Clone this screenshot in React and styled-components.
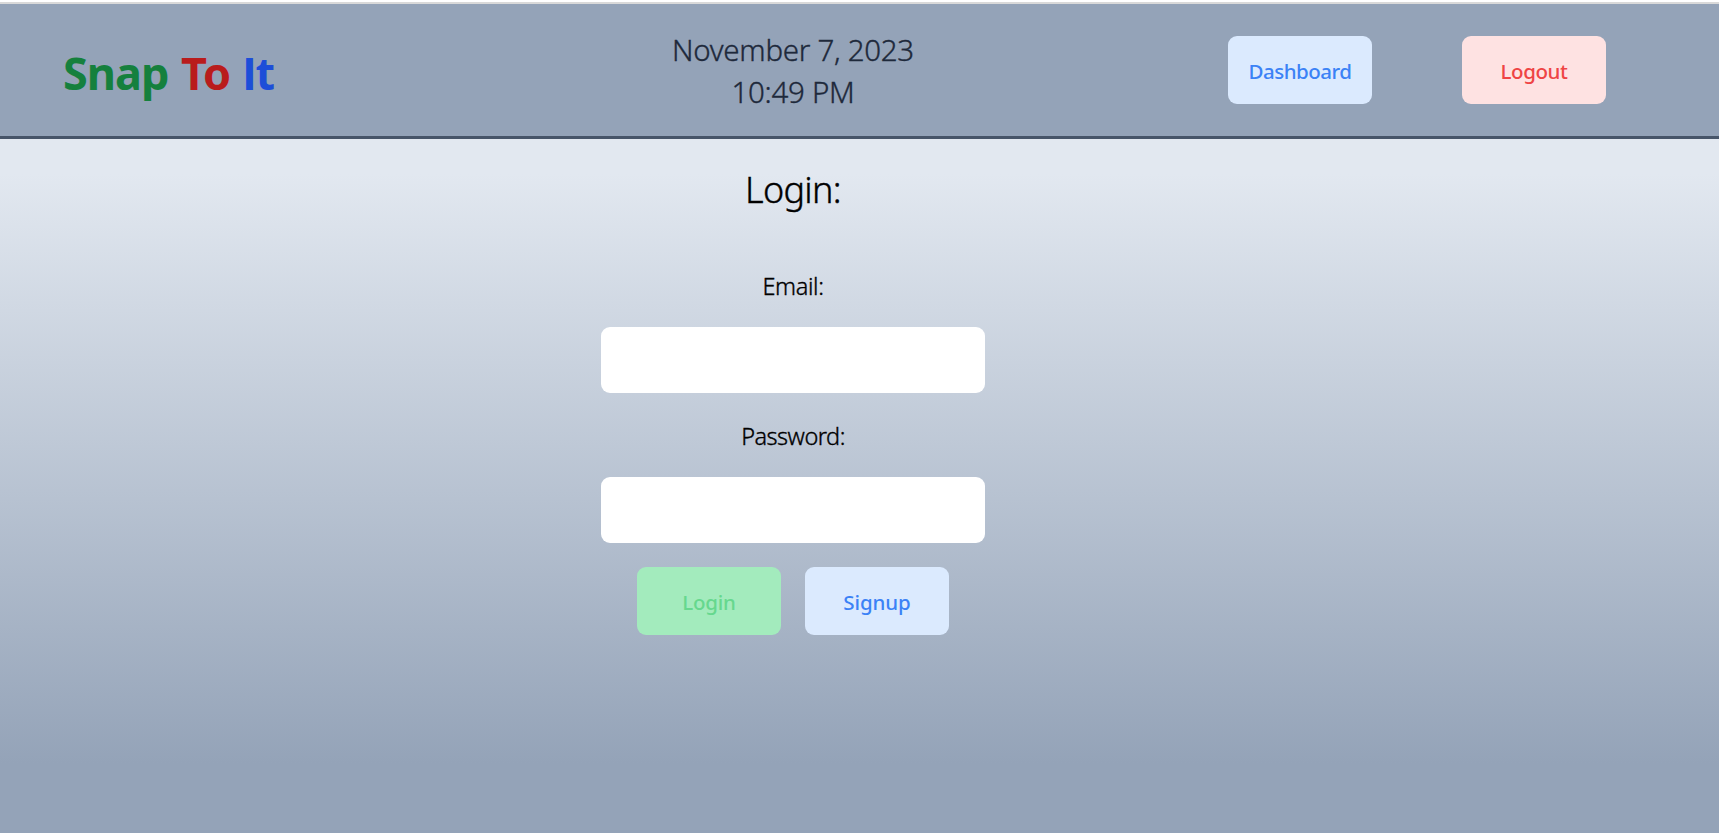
import React, { useState } from "react";
import styled, { createGlobalStyle } from "styled-components";

const GlobalStyle = createGlobalStyle`
  *, *::before, *::after {
    box-sizing: border-box;
  }
  body {
    margin: 0;
    color: #000;
    font-family: "Noto Sans", "Open Sans", sans-serif;
  }
`;

const Page = styled.div`
  display: flex;
  flex-direction: column;
  height: 100vh;
  overflow: hidden;
  border-top: 2px solid #fff;
`;

const Header = styled.header`
  display: grid;
  grid-template-columns: 538px 384px 1fr;
  align-items: center;
  flex: none;
  height: 137px;
  padding-left: 63px;
  background: #94a3b8;
  border-top: 2px solid #d9d9d9;
  border-bottom: 3px solid #475569;
`;

const Logo = styled.h1`
  display: flex;
  margin: 5px 0 0;
  font-size: 45px;
  font-weight: 700;
  line-height: 60px;
`;

const LogoWord = styled.span`
  color: ${(p) => p.$color};
  width: ${(p) => p.$width}px;
  white-space: nowrap;
  font-family: ${(p) => p.$family || '"Noto Sans"'}, sans-serif;
  letter-spacing: ${(p) => p.$tracking}px;
`;

const Clock = styled.div`
  display: flex;
  flex-direction: column;
  align-items: center;
  margin-top: 2px;
  color: #1e293b;
  font-size: 29.5px;
  font-weight: 300;
  -webkit-text-stroke: 0.35px currentColor;
  line-height: 42px;
  letter-spacing: -0.3px;
`;

const HeaderActions = styled.nav`
  display: flex;
  gap: 90px;
  margin-left: 243px;
`;

const tones = {
  blue: ["#dbeafe", "#3b82f6"],
  red: ["#fee2e2", "#ef4444"],
  green: ["#a3ebbd", "#66d88e"],
};

const Button = styled.button`
  width: 144px;
  height: 68px;
  padding: 2px 0 0;
  border: 0;
  border-radius: 9px;
  background: ${(p) => tones[p.$tone][0]};
  color: ${(p) => tones[p.$tone][1]};
  font-family: "Noto Sans", sans-serif;
  font-size: 20.5px;
  font-weight: 500;
  line-height: 30px;
  letter-spacing: ${(p) => p.$tracking}px;
`;

const Main = styled.main`
  flex: 1;
  padding: 24px 0 0 601px;
  background: linear-gradient(to bottom, #e2e8f0 5%, #94a3b8 90%);
`;

const Form = styled.form`
  display: flex;
  flex-direction: column;
  align-items: center;
  width: 384px;
`;

const Title = styled.h2`
  margin: 0 0 51px;
  font-size: 36px;
  font-weight: 300;
  -webkit-text-stroke: 0.4px currentColor;
  line-height: 54px;
  letter-spacing: -0.7px;
`;

const Field = styled.label`
  display: flex;
  flex-direction: column;
  align-items: center;
  width: 100%;
  margin-bottom: 24px;
  font-size: 23.5px;
  font-weight: 300;
  line-height: 36px;
  letter-spacing: ${(p) => p.$tracking}px;
`;

const FieldName = styled.span`
  margin-bottom: 23px;
  -webkit-text-stroke: 0.35px currentColor;

  ${Field} + ${Field} & {
    padding-top: 1px;
  }
`;

const Input = styled.input`
  width: 100%;
  height: 66px;
  padding: 0 18px;
  border: 0;
  border-radius: 9px;
  background: #fff;
  font: inherit;
`;

const FormActions = styled.div`
  display: flex;
  gap: 24px;
`;

export default function App() {
  const [email, setEmail] = useState("");
  const [password, setPassword] = useState("");

  return (
    <Page>
      <GlobalStyle />
      <Header>
        <Logo>
          <LogoWord $color="#15803d" $width={118} $tracking={-1}>Snap</LogoWord>
          <LogoWord $color="#b91c1c" $width={61} $tracking={-0.8}>To</LogoWord>
          <LogoWord $color="#1d4ed8" $width={34} $tracking={-1.5} $family='"Open Sans"'>It</LogoWord>
        </Logo>
        <Clock>
          <span>November 7, 2023</span>
          <span>10:49 PM</span>
        </Clock>
        <HeaderActions>
          <Button type="button" $tone="blue" $tracking={-0.5}>Dashboard</Button>
          <Button type="button" $tone="red" $tracking={-0.4}>Logout</Button>
        </HeaderActions>
      </Header>
      <Main>
        <Form onSubmit={(e) => e.preventDefault()}>
          <Title>Login:</Title>
          <Field $tracking={-0.35}>
            <FieldName>Email:</FieldName>
            <Input type="email" value={email} onChange={(e) => setEmail(e.target.value)} />
          </Field>
          <Field $tracking={-0.5}>
            <FieldName>Password:</FieldName>
            <Input type="password" value={password} onChange={(e) => setPassword(e.target.value)} />
          </Field>
          <FormActions>
            <Button type="submit" $tone="green" $tracking={-0.2}>Login</Button>
            <Button type="button" $tone="blue" $tracking={-0.1}>Signup</Button>
          </FormActions>
        </Form>
      </Main>
    </Page>
  );
}
